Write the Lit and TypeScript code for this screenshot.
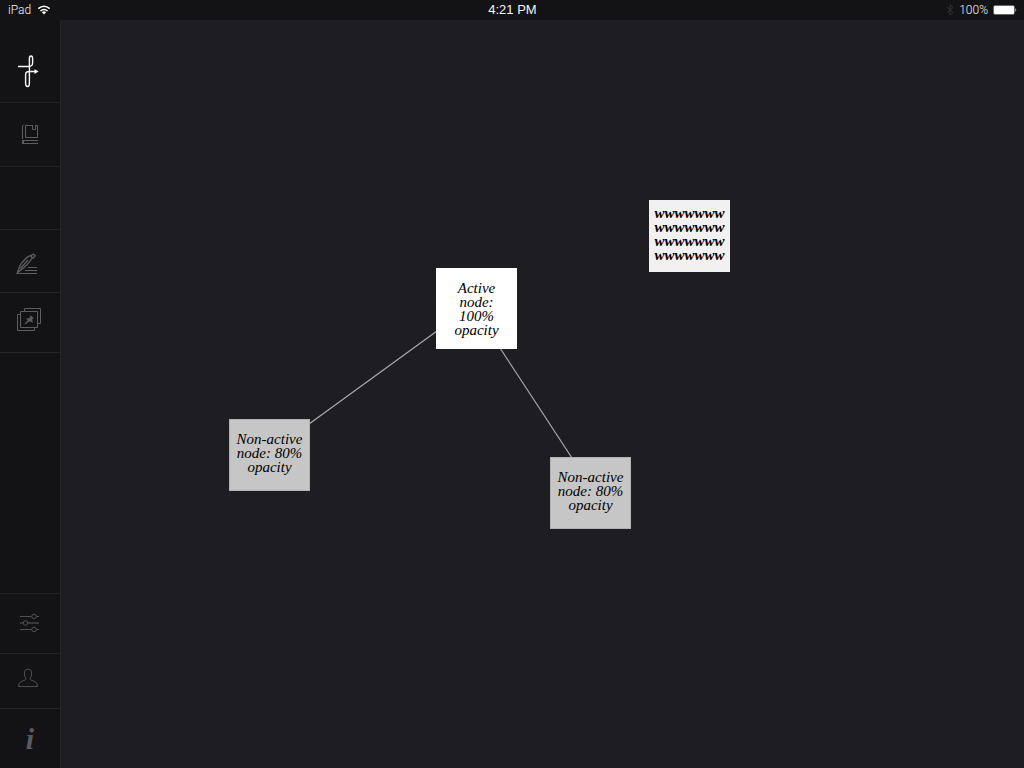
import { LitElement, html, css, svg } from "lit";
import { customElement } from "lit/decorators.js";
import { classMap } from "lit/directives/class-map.js";
import { styleMap } from "lit/directives/style-map.js";

interface MapNode {
  text: string;
  x: number;
  y: number;
  kind: "active" | "idle" | "draft";
}

@customElement("status-bar")
class StatusBar extends LitElement {
  static styles = css`
    :host {
      display: grid;
      grid-template-columns: 1fr auto 1fr;
      align-items: center;
      height: 20px;
      padding: 0 7px 0 8px;
      background: #131315;
      color: #f4f4f4;
      font: 300 12px/20px Roboto, "Liberation Sans", sans-serif;
    }
    .side {
      display: flex;
      align-items: center;
      gap: 6px;
    }
    .right {
      justify-content: flex-end;
      gap: 5px;
    }
    .time {
      font-size: 13px;
      font-weight: 400;
      font-family: "Liberation Sans", sans-serif;
    }
    svg {
      display: block;
    }
  `;

  render() {
    return html`
      <div class="side">
        <span>iPad</span>
        <svg width="14" height="10" viewBox="0 0 14 10" fill="none" stroke="#fff" stroke-width="1.5">
          <path d="M1.3 3.6Q7 -1.2 12.7 3.6M3.4 6Q7 2.9 10.6 6" />
          <path d="M4.9 7.2Q7 5.4 9.1 7.2L7 9.5z" fill="#fff" stroke="none" />
        </svg>
      </div>
      <span class="time">4:21 PM</span>
      <div class="side right">
        <svg width="8" height="12" viewBox="0 0 8 12" fill="none" stroke="#333336">
          <path d="M1 3L7 8.5L4 11.2V.8L7 3.5L1 9" />
        </svg>
        <span>100%</span>
        <svg width="24" height="10" viewBox="0 0 24 10">
          <rect x=".5" y=".5" width="21" height="9" rx="1.5" fill="none" stroke="#66666a" />
          <rect x="1" y="1" width="20" height="8" rx="1" fill="#fff" />
          <path d="M22.5 3Q24 5 22.5 7z" fill="#fff" />
        </svg>
      </div>
    `;
  }
}

@customElement("tool-rail")
class ToolRail extends LitElement {
  static styles = css`
    :host {
      display: flex;
      flex-direction: column;
      width: 60px;
      background: #131315;
      border-right: 1px solid #242428;
    }
    nav {
      display: flex;
      flex-direction: column;
      flex: 1;
    }
    button,
    .blank {
      display: block;
      box-sizing: content-box;
      width: 60px;
      padding: 0;
      border: 0;
      border-bottom: 1px solid #242427;
      background: none;
      color: #5c5c61;
    }
    .blank {
      height: 62px;
    }
    .spacer {
      flex: 1;
      border-bottom: 1px solid #242427;
    }
    button:last-child {
      border-bottom: 0;
    }
    svg {
      display: block;
      fill: none;
      stroke: currentColor;
    }
    .logo {
      color: #f6f6f6;
    }
    .dim {
      color: #505054;
    }
    .info {
      font: italic bold 30px/57px "Liberation Serif", serif;
      height: 59px;
    }
  `;

  render() {
    return html`
      <nav aria-label="Tools">
        <button class="logo" aria-label="Home">
          <svg width="60" height="82" viewBox="0 0 60 82">
            <path stroke-width="1.4" d="M18 46.5H29Q32.6 46.3 32.6 43V38.6Q32.6 36 31 36Q29.4 36 29.4 38.6V63.5Q29.4 66.5 27.5 66.5Q25.6 66.5 25.6 63.5V54.5Q25.6 51.5 29 51.5H36" />
            <path d="M34.5 49L38.5 51.5L34.5 54z" fill="currentColor" stroke="none" />
          </svg>
        </button>
        <button aria-label="Notebook">
          <svg width="60" height="63" viewBox="0 0 60 63">
            <path d="M24 21.5L22.5 23V36M32.5 22.5H25.5V34.5H37.5V22.5H35.5V26.5H32.5V22M38 37.5H24M38 40.5H24" />
            <path d="M23 37V41" stroke-width="2" />
          </svg>
        </button>
        <div class="blank"></div>
        <button aria-label="Write">
          <svg width="60" height="62" viewBox="0 0 60 62">
            <path d="M17 43.5H37M25 40.5H37M28 37.5H37" />
            <path stroke-width="1.4" d="M17.5 42.5L20 35.5Q24 29 29.5 25.8Q32 26 32.2 28Q29 33.5 23.5 38zM20.5 38.5L28 30M31 25.5L33.5 24.2L35.3 25.8L33 28.5" />
          </svg>
        </button>
        <button aria-label="Pinned cards">
          <svg width="60" height="59" viewBox="0 0 60 59">
            <path d="M20.5 18.5H37.5V34.5H20.5zM20 21.5H17.5V37.5H34.5V35M24.5 18V15.5H40.5V30.5H38" />
            <path d="M24.5 31.5L25 30.3L27.8 27.6L26 25.6L29.3 25.2L30.8 22.2L33.6 25L32.2 26.6L33 29.8L30.6 28.6L28.8 28.8L26 31z" fill="currentColor" stroke="none" />
          </svg>
        </button>
        <div class="spacer"></div>
        <button class="dim" aria-label="Settings">
          <svg width="60" height="59" viewBox="0 0 60 59">
            <path d="M20 22.5H31.5M36.5 22.5H39M20 35.5H31.5M36.5 35.5H39" />
            <path d="M20 29H23M28 29H39" stroke="#38383b" stroke-width="2" />
            <circle cx="34" cy="22.5" r="2.3" />
            <circle cx="25.5" cy="29" r="2.3" />
            <circle cx="34" cy="35.5" r="2.3" />
          </svg>
        </button>
        <button class="dim" aria-label="Account">
          <svg width="60" height="54" viewBox="0 0 60 54">
            <path d="M18.5 32.5H37.5Q37.5 28 34 27.2Q30.3 26.6 30 24.5Q31.7 22.5 31.7 19Q31.7 15 28 15Q24.3 15 24.3 19Q24.3 22.5 26 24.5Q25.7 26.6 22 27.2Q18.5 28 18.5 32.5z" />
          </svg>
        </button>
        <button class="info" aria-label="Information">i</button>
      </nav>
    `;
  }
}

@customElement("node-canvas")
class NodeCanvas extends LitElement {
  static styles = css`
    :host {
      display: block;
      position: relative;
      overflow: hidden;
      background: #1e1d22;
    }
    .links {
      display: block;
      position: absolute;
      width: 100%;
      height: 100%;
      stroke: #aaaaad;
      stroke-width: 1.2;
    }
    .node {
      position: absolute;
      display: flex;
      align-items: center;
      justify-content: center;
      box-sizing: border-box;
      width: 81px;
      min-height: 72px;
      padding: 4px 4px 8px;
      text-align: center;
      color: #000;
      font: italic 15px/14px "Liberation Serif", serif;
    }
    .active {
      min-height: 81px;
      padding: 8px 16px;
      background: #fff;
    }
    .idle {
      background: #c6c6c6;
      border: 1px solid #b2b2b2;
    }
    .draft {
      background: #f1f1f1;
      font-weight: bold;
      overflow-wrap: anywhere;
    }
  `;

  private nodes: MapNode[] = [
    { text: "Active node: 100% opacity", x: 375, y: 248, kind: "active" },
    { text: "Non-active node: 80% opacity", x: 168, y: 399, kind: "idle" },
    { text: "Non-active node: 80% opacity", x: 489, y: 437, kind: "idle" },
    { text: "wwwwwwwwwwwwwwwwwwwwwwwwwwww", x: 588, y: 180, kind: "draft" },
  ];

  private links = [
    [376, 311, 248, 404],
    [439, 328, 511, 438],
  ];

  render() {
    return html`
      <svg class="links">
        ${this.links.map(([x1, y1, x2, y2]) => svg`<line x1=${x1} y1=${y1} x2=${x2} y2=${y2} />`)}
      </svg>
      ${this.nodes.map(
        (n) => html`<div
          class=${classMap({ node: true, [n.kind]: true })}
          style=${styleMap({ left: `${n.x}px`, top: `${n.y}px` })}
        ><span>${n.text}</span></div>`
      )}
    `;
  }
}

@customElement("app-root")
class AppRoot extends LitElement {
  static styles = css`
    :host {
      display: flex;
      flex-direction: column;
      min-height: 100vh;
    }
    .body {
      display: flex;
      flex: 1;
    }
    node-canvas {
      flex: 1;
    }
  `;

  render() {
    return html`
      <status-bar></status-bar>
      <div class="body">
        <tool-rail></tool-rail>
        <node-canvas></node-canvas>
      </div>
    `;
  }
}
